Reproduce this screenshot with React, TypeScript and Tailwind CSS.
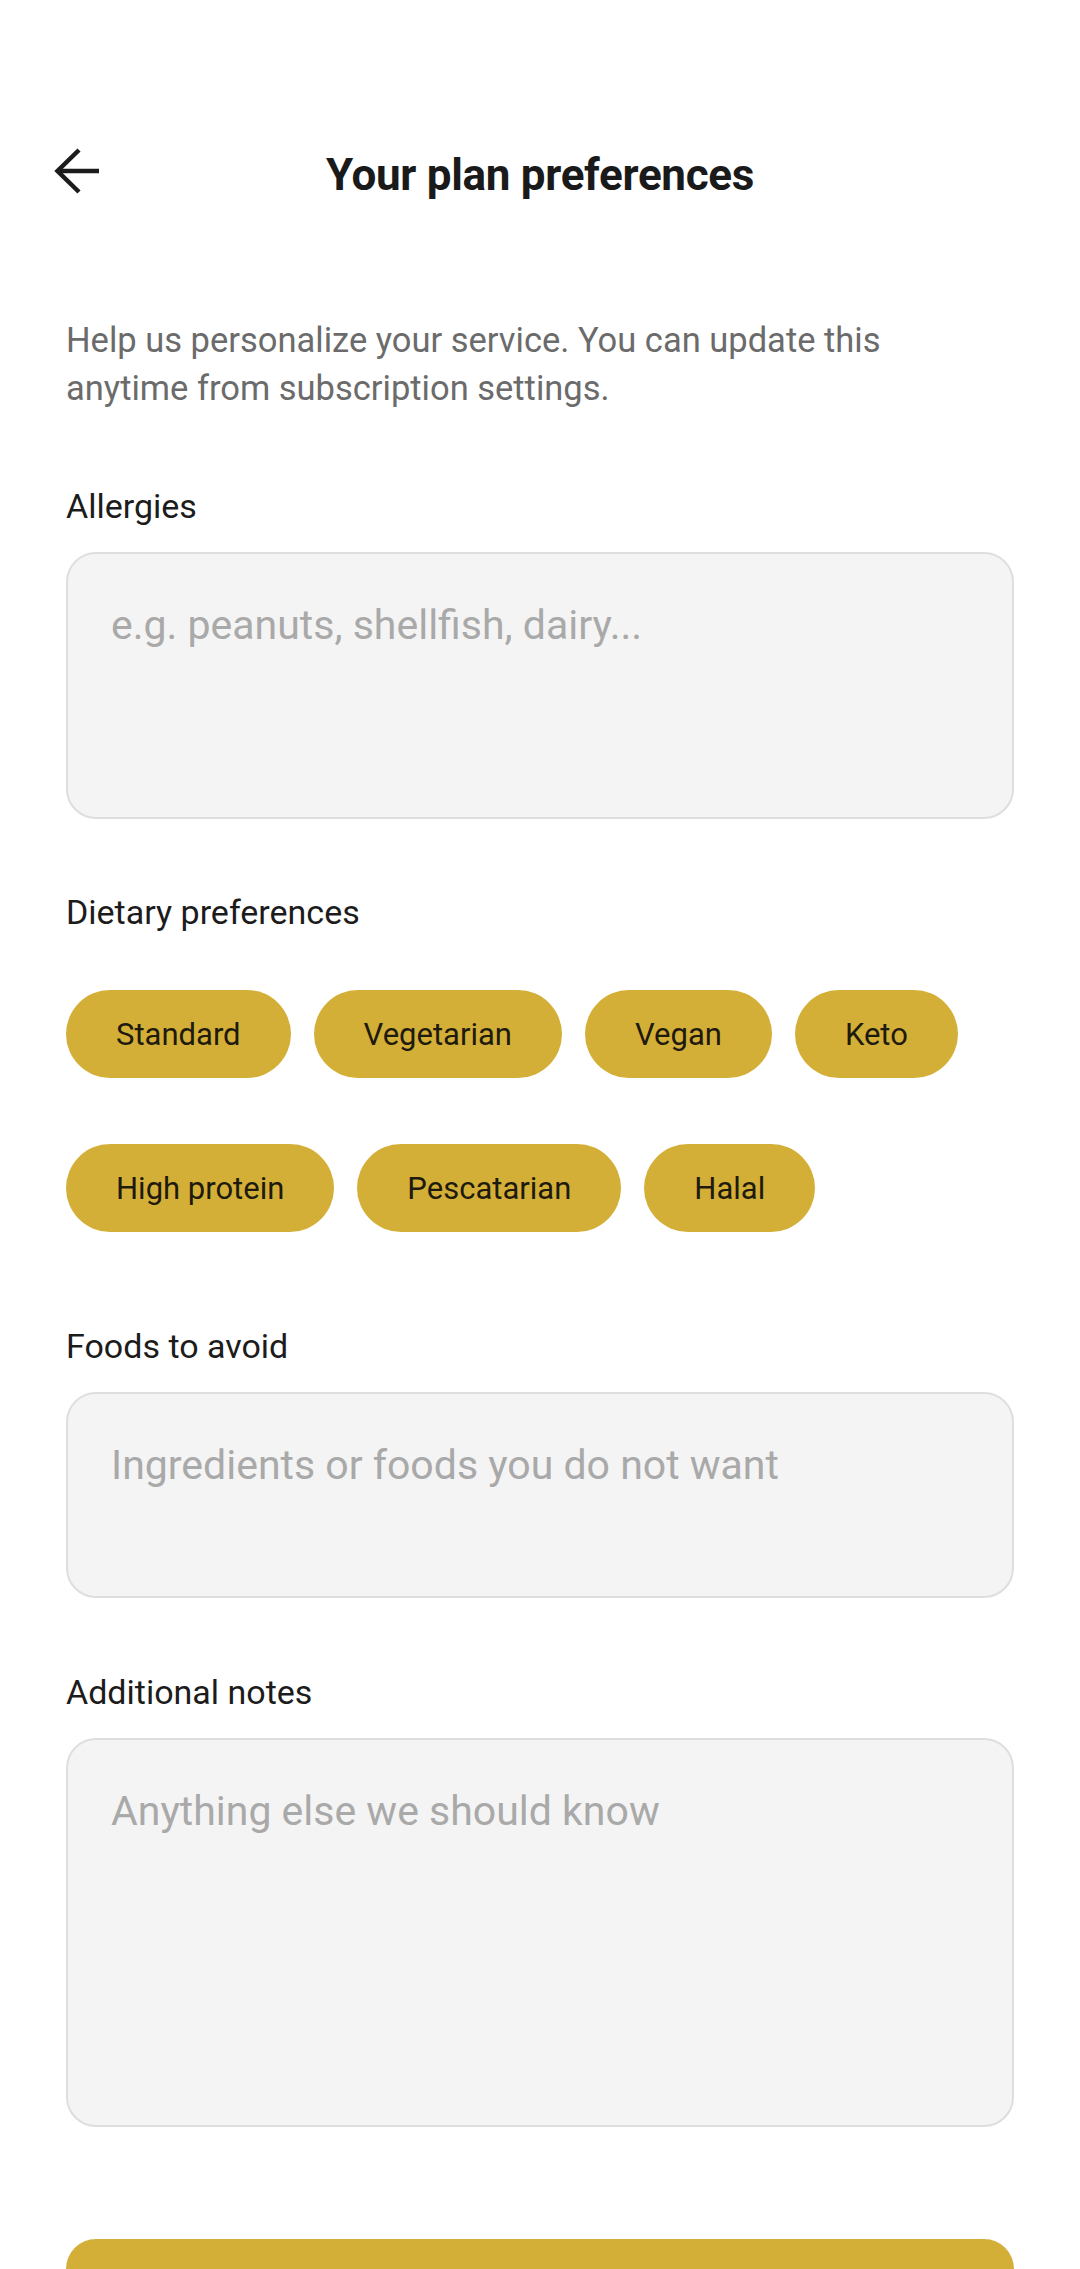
import React, { useState } from 'react';

const dietOptions = ['Standard', 'Vegetarian', 'Vegan', 'Keto', 'High protein', 'Pescatarian', 'Halal'];

const BackArrow = () => (
    <svg width="48" height="48" viewBox="0 0 48 48" fill="none" stroke="#1c1c1c" strokeWidth="4.5">
        <path d="M46 24H5" />
        <path d="M26 3L4.5 24L26 45" />
    </svg>
);

const Field = ({ label, placeholder, height, className = '' }: { label: string; placeholder: string; height: string; className?: string }) => (
    <div className={`flex flex-col ${className}`}>
        <label className="text-[34px] leading-[48px] text-[#1c1c1c]">{label}</label>
        <textarea
            placeholder={placeholder}
            className={`mt-[22px] block w-full resize-none ${height} rounded-[30px] border-2 border-[#dedede] bg-[#f4f4f4] px-[43px] pt-[43px] text-[41px] leading-[56px] text-[#1c1c1c] placeholder:text-[#a9a9a9] outline-none`}
        />
    </div>
);

export default function App() {
    const [selected, setSelected] = useState<string[]>([]);

    const toggle = (opt: string) =>
        setSelected((prev) => (prev.includes(opt) ? prev.filter((o) => o !== opt) : [...prev, opt]));

    return (
        <div className="min-h-screen w-full bg-white font-[Roboto,sans-serif]">
            {/* Header */}
            <div className="mt-[145px] grid h-[60px] grid-cols-[1fr_auto_1fr] items-center">
                <button className="-mt-[8px] ml-[53px] flex h-[48px] w-[48px] items-center justify-center">
                    <BackArrow />
                </button>
                <h1 className="text-[44px] font-bold leading-[60px] tracking-[-0.3px] text-[#1a1a1a]">Your plan preferences</h1>
                <div />
            </div>

            <div className="px-[66px] pb-[60px]">
                <p className="mt-[111px] max-w-[900px] text-[34.5px] leading-[48px] text-[#6b6b6b]">
                    Help us personalize your service. You can update this anytime from subscription settings.
                </p>

                <Field className="mt-[70px]" label="Allergies" placeholder="e.g. peanuts, shellfish, dairy..." height="h-[267px]" />

                {/* Dietary preferences */}
                <div className="mt-[69px] flex flex-col">
                    <span className="text-[34px] leading-[48px] text-[#1c1c1c]">Dietary preferences</span>
                    <div className="mt-[54px] flex flex-wrap gap-x-[23px] gap-y-[66px]">
                        {dietOptions.map((opt) => (
                            <button
                                key={opt}
                                onClick={() => toggle(opt)}
                                className={`h-[88px] rounded-full px-[50px] text-[31px] leading-none text-[#1e1a0e] ${selected.includes(opt) ? 'bg-[#b8942a]' : 'bg-[#d4af37]'}`}
                            >
                                {opt}
                            </button>
                        ))}
                    </div>
                </div>

                <Field className="mt-[90px]" label="Foods to avoid" placeholder="Ingredients or foods you do not want" height="h-[206px]" />

                <Field className="mt-[70px]" label="Additional notes" placeholder="Anything else we should know" height="h-[389px]" />

                <button className="mt-[112px] flex h-[150px] w-full items-center justify-center rounded-[30px] bg-[#d4af37] text-[36px] font-semibold text-[#1e1a0e]">
                    Save preferences
                </button>
            </div>
        </div>
    );
}
